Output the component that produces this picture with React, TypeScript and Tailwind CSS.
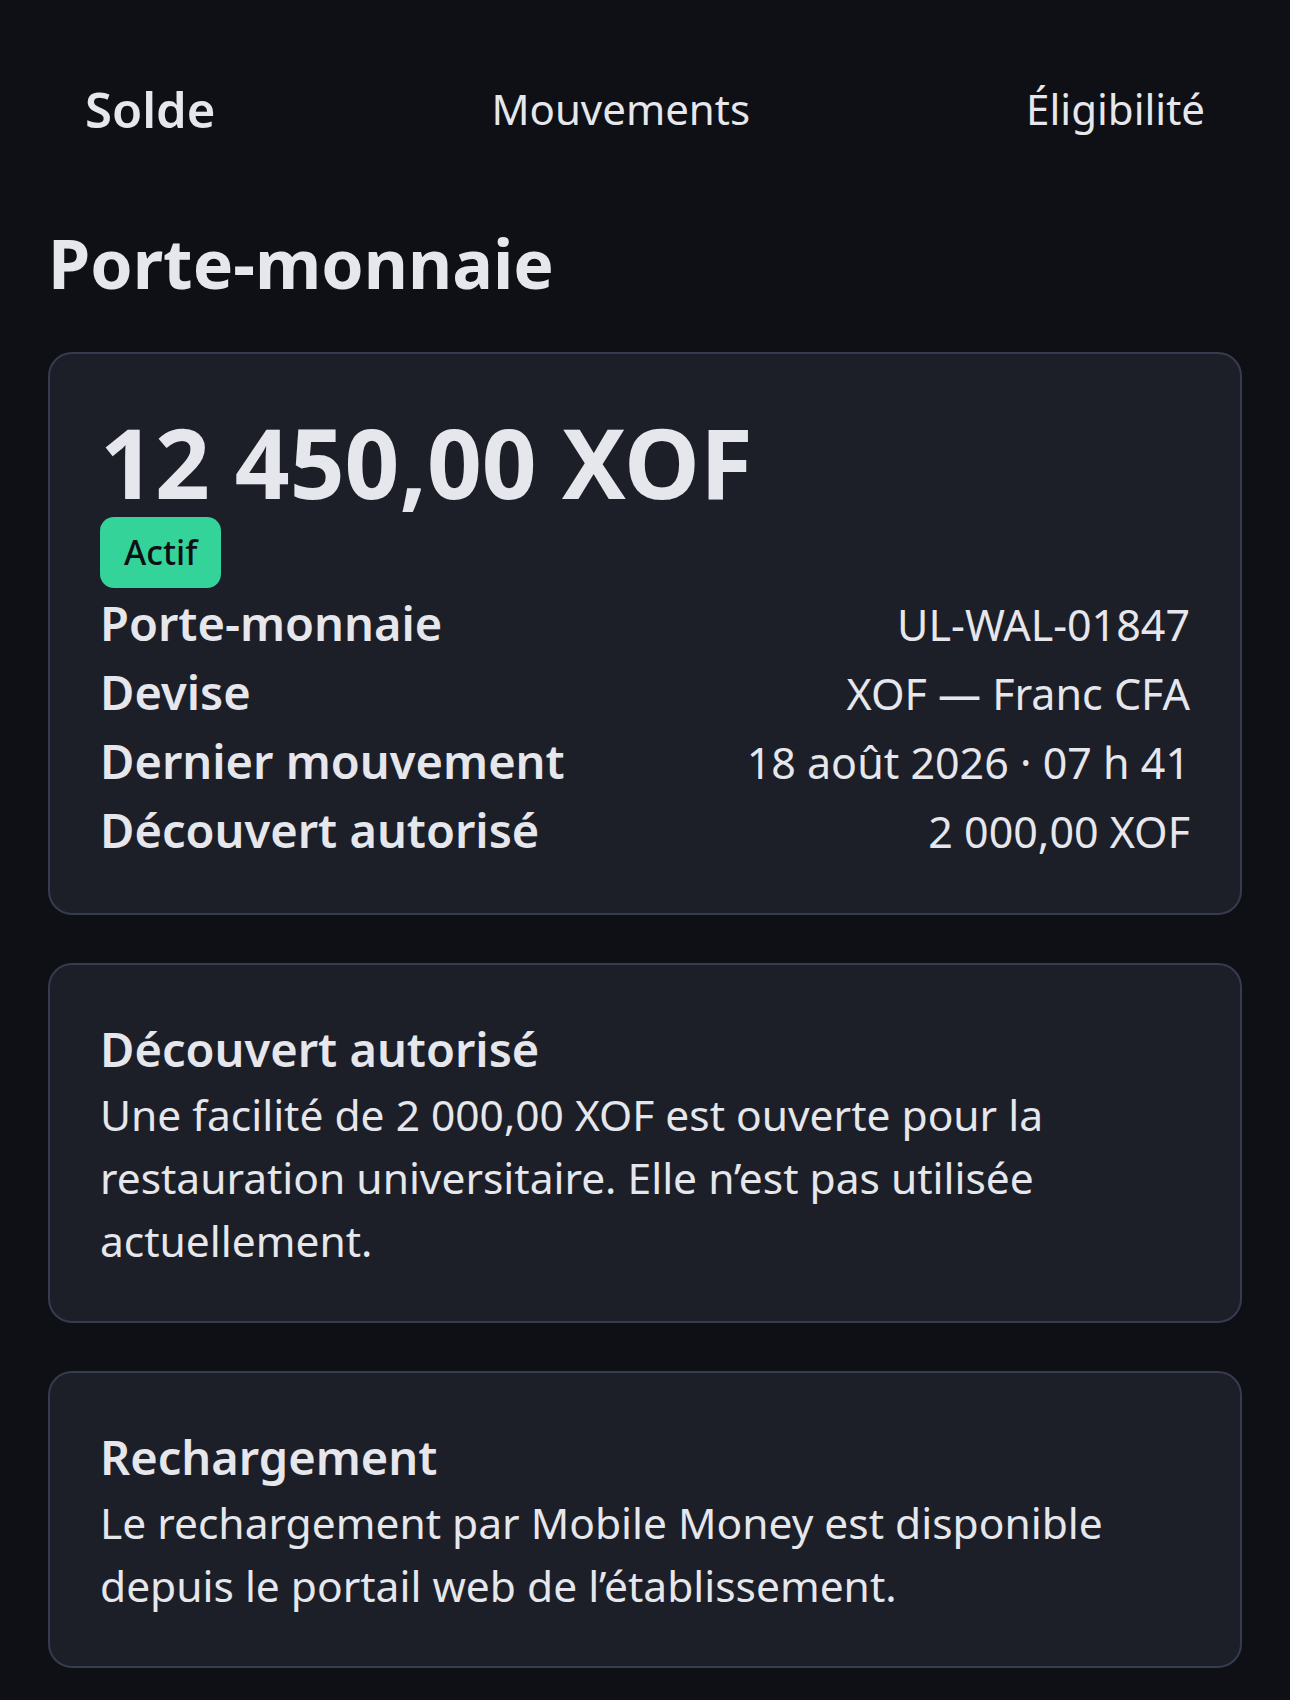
const rows = [
  { label: "Porte-monnaie", value: "UL-WAL-01847" },
  { label: "Devise", value: "XOF — Franc CFA" },
  { label: "Dernier mouvement", value: "18 août 2026 · 07 h 41" },
  { label: "Découvert autorisé", value: "2 000,00 XOF" },
];

const App = () => {
  return (
    <div className="min-h-screen bg-[#0e1016] text-[#e6e7ec] font-['Noto_Sans',sans-serif]">
      {/* Tabs */}
      <nav className="flex items-center justify-between px-[85px] pt-[82px] pb-[34px] h-[170px]">
        <span className="text-[49px] font-semibold leading-[64px]">Solde</span>
        <span className="text-[42px] leading-[64px]">Mouvements</span>
        <span className="text-[42px] leading-[64px]">Éligibilité</span>
      </nav>

      <main className="px-[48px] pb-[48px]">
        <h1 className="text-[68px] font-bold leading-[96px] mt-[45px] mb-[41px]">Porte-monnaie</h1>

        {/* Balance card */}
        <section className="rounded-[24px] border-2 border-[#363b4d] bg-[#1d1f28] px-[50px] pt-[53px] pb-[48px]">
          <div className="text-[96px] font-bold leading-[110px]">12 450,00 XOF</div>
          <span className="inline-block rounded-[14px] bg-[#34d399] px-[24px] text-[34px] leading-[71px] font-medium text-[#0e1016]">
            Actif
          </span>
          <dl className="mt-[1px]">
            {rows.map((r) => (
              <div key={r.label} className="flex justify-between items-baseline h-[69px]">
                <dt className="text-[47px] font-semibold leading-[69px]">{r.label}</dt>
                <dd className="text-[43px] leading-[69px]">{r.value}</dd>
              </div>
            ))}
          </dl>
        </section>

        <section className="mt-[48px] rounded-[24px] border-2 border-[#363b4d] bg-[#1d1f28] px-[50px] pt-[50px] pb-[49px]">
          <h2 className="text-[47px] font-semibold leading-[68px]">Découvert autorisé</h2>
          <p className="text-[42.5px] leading-[63px]">
            Une facilité de 2 000,00 XOF est ouverte pour la restauration universitaire. Elle n’est pas utilisée actuellement.
          </p>
        </section>

        <section className="mt-[48px] rounded-[24px] border-2 border-[#363b4d] bg-[#1d1f28] px-[50px] pt-[50px] pb-[49px]">
          <h2 className="text-[47px] font-semibold leading-[68px]">Rechargement</h2>
          <p className="text-[42.5px] leading-[63px]">
            Le rechargement par Mobile Money est disponible depuis le portail web de l’établissement.
          </p>
        </section>
      </main>
    </div>
  );
};

export default App;
